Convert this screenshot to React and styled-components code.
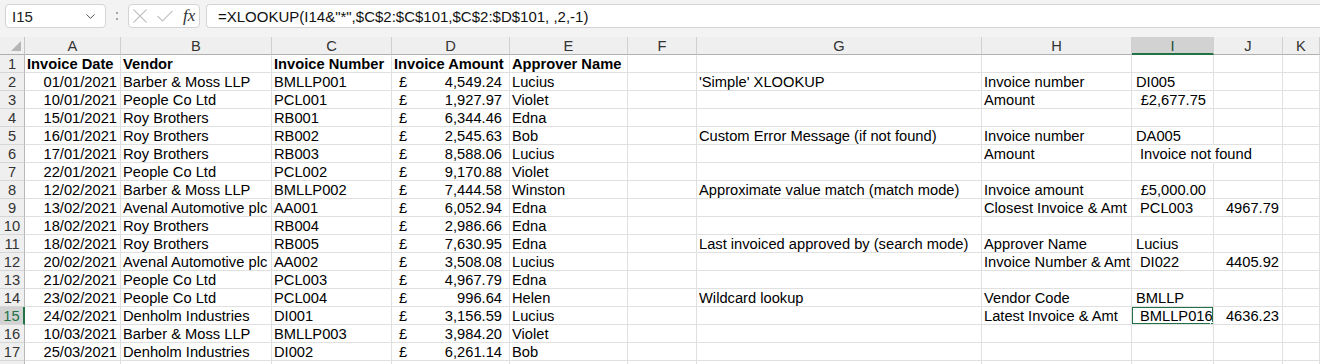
import React from 'react';
import styled, { createGlobalStyle } from 'styled-components';
import { ChevronDown } from 'lucide-react';

const GlobalStyle = createGlobalStyle`
  html, body {
    margin: 0;
    padding: 0;
    background: #ffffff;
    overflow: hidden;
  }
  body {
    font-family: "Liberation Sans", Arial, sans-serif;
    color: #000;
  }
`;

const FormulaBar = styled.div`
  display: flex;
  align-items: stretch;
  height: 37px;
  box-sizing: border-box;
  padding: 4px 0 9px 5px;
  background: #f3f3f3;
`;

const Box = styled.div`
  box-sizing: border-box;
  background: #fff;
  border: 1px solid #d4d4d4;
  border-radius: 4px;
  display: flex;
  align-items: center;
`;

const NameBox = styled(Box)`
  width: 101px;
  padding: 0 7px 0 6px;
  justify-content: space-between;
  font-size: 15px;
  color: #222;
`;

const Grip = styled.div`
  width: 22px;
  display: flex;
  flex-direction: column;
  align-items: center;
  justify-content: center;
  gap: 4px;
  span {
    width: 2px;
    height: 2px;
    background: #a6a6a6;
  }
`;

const FxBox = styled(Box)`
  width: 72px;
  padding: 0 0 0 4px;
  margin-right: 6px;
  svg {
    flex-shrink: 0;
  }
`;

const IconGap = styled.span`
  width: ${p => p.$w}px;
  flex-shrink: 0;
`;

const Fx = styled.span`
  font-family: "Liberation Serif", "Times New Roman", serif;
  font-style: italic;
  font-size: 17px;
  color: #333;
`;

const FormulaInput = styled(Box)`
  flex: 1;
  border-right: none;
  border-radius: 4px 0 0 4px;
  padding-left: 11px;
  font-size: 15px;
  color: #111;
  white-space: nowrap;
`;

const Sheet = styled.div`
  display: grid;
  grid-template-columns: 25px 96px 151px 120px 118px 118px 69px 285px 150px 82px 69px 1fr;
  grid-auto-rows: 18px;
  font-size: 14.7px;
`;

const Corner = styled.div`
  box-sizing: border-box;
  background: #efefef;
  border-right: 1px solid #c6c6c6;
  border-bottom: 1px solid #b0b0b0;
  display: flex;
  align-items: flex-end;
  justify-content: flex-end;
  padding: 0 3px 3px 0;
`;

const ColHead = styled.div`
  box-sizing: border-box;
  background: ${p => (p.$selected ? '#d2d2d2' : '#efefef')};
  border-right: 1px solid #d0d0d0;
  border-bottom: ${p => (p.$selected ? '2px solid #217346' : '1px solid #b0b0b0')};
  text-align: center;
  line-height: 18px;
  color: ${p => (p.$selected ? '#1c4f33' : '#333')};
  overflow: hidden;
`;

const RowHead = styled.div`
  box-sizing: border-box;
  background: ${p => (p.$selected ? '#d2d2d2' : '#efefef')};
  border-right: ${p => (p.$selected ? '2px solid #217346' : '1px solid #b8b8b8')};
  border-bottom: 1px solid #d6d6d6;
  text-align: center;
  line-height: 18px;
  color: ${p => (p.$selected ? '#217346' : '#333')};
  overflow: hidden;
`;

const Cell = styled.div`
  position: relative;
  box-sizing: border-box;
  border-right: 1px solid ${p => (p.$spill ? 'transparent' : '#e0e0e0')};
  border-bottom: 1px solid #e0e0e0;
  padding: 0 ${p => p.$padRight ?? 3}px 0 ${p => p.$padLeft ?? 2}px;
  font-weight: ${p => (p.$bold ? 700 : 400)};
  text-align: ${p => p.$align || 'left'};
  white-space: nowrap;
  overflow: ${p => (p.$spill ? 'visible' : 'hidden')};
  line-height: 18px;
`;

const MoneyCell = styled(Cell)`
  display: flex;
  justify-content: space-between;
  padding: 0 7px 0 7px;
`;

const SpillBox = styled.div`
  position: absolute;
  left: -1px;
  top: -1px;
  width: 152px;
  height: 19px;
  border: 1px solid #3c79d0;
  box-sizing: border-box;
  z-index: 2;
  pointer-events: none;
`;

const SelectionBox = styled.div`
  position: absolute;
  left: -1px;
  top: -1px;
  width: 83px;
  height: 19px;
  border: 2px solid #217346;
  box-sizing: border-box;
  z-index: 3;
  pointer-events: none;
`;

const FillHandle = styled.div`
  position: absolute;
  left: 78px;
  top: 15px;
  width: 5px;
  height: 5px;
  background: #217346;
  border: 1px solid #fff;
  z-index: 4;
`;

const COLS = ['A', 'B', 'C', 'D', 'E', 'F', 'G', 'H', 'I', 'J', 'K'];

const table = [
  ['01/01/2021', 'Barber & Moss LLP', 'BMLLP001', '4,549.24', 'Lucius'],
  ['10/01/2021', 'People Co Ltd', 'PCL001', '1,927.97', 'Violet'],
  ['15/01/2021', 'Roy Brothers', 'RB001', '6,344.46', 'Edna'],
  ['16/01/2021', 'Roy Brothers', 'RB002', '2,545.63', 'Bob'],
  ['17/01/2021', 'Roy Brothers', 'RB003', '8,588.06', 'Lucius'],
  ['22/01/2021', 'People Co Ltd', 'PCL002', '9,170.88', 'Violet'],
  ['12/02/2021', 'Barber & Moss LLP', 'BMLLP002', '7,444.58', 'Winston'],
  ['13/02/2021', 'Avenal Automotive plc', 'AA001', '6,052.94', 'Edna'],
  ['18/02/2021', 'Roy Brothers', 'RB004', '2,986.66', 'Edna'],
  ['18/02/2021', 'Roy Brothers', 'RB005', '7,630.95', 'Edna'],
  ['20/02/2021', 'Avenal Automotive plc', 'AA002', '3,508.08', 'Lucius'],
  ['21/02/2021', 'People Co Ltd', 'PCL003', '4,967.79', 'Edna'],
  ['23/02/2021', 'People Co Ltd', 'PCL004', '996.64', 'Helen'],
  ['24/02/2021', 'Denholm Industries', 'DI001', '3,156.59', 'Lucius'],
  ['10/03/2021', 'Barber & Moss LLP', 'BMLLP003', '3,984.20', 'Violet'],
  ['25/03/2021', 'Denholm Industries', 'DI002', '6,261.14', 'Bob'],
];

// G..J lookup examples, keyed by row number
const lookups = {
  2: { G: "'Simple' XLOOKUP", H: 'Invoice number', I: 'DI005' },
  3: { H: 'Amount', I: { text: '£2,677.75', money: true } },
  5: { G: 'Custom Error Message (if not found)', H: 'Invoice number', I: 'DA005' },
  6: { H: 'Amount', I: { text: 'Invoice not found', indent: true, spill: true } },
  8: { G: 'Approximate value match (match mode)', H: 'Invoice amount', I: { text: '£5,000.00', money: true } },
  9: { H: 'Closest Invoice & Amt', I: { text: 'PCL003', indent: true }, J: '4967.79' },
  11: { G: 'Last invoiced approved by (search mode)', H: 'Approver Name', I: 'Lucius' },
  12: { H: 'Invoice Number & Amt', I: { text: 'DI022', indent: true }, J: '4405.92' },
  14: { G: 'Wildcard lookup', H: 'Vendor Code', I: 'BMLLP' },
  15: { H: 'Latest Invoice & Amt', I: { text: 'BMLLP016', indent: true }, J: '4636.23' },
};

function renderCell(row, col) {
  const key = `${col}${row}`;
  if (row === 1) {
    const heads = ['Invoice Date', 'Vendor', 'Invoice Number', 'Invoice Amount', 'Approver Name'];
    const i = COLS.indexOf(col);
    return <Cell key={key} $bold>{i < 5 ? heads[i] : ''}</Cell>;
  }
  const rec = table[row - 2];
  if (rec && col === 'A') return <Cell key={key} $align="right">{rec[0]}</Cell>;
  if (rec && col === 'B') return <Cell key={key}>{rec[1]}</Cell>;
  if (rec && col === 'C') return <Cell key={key}>{rec[2]}</Cell>;
  if (rec && col === 'D')
    return (
      <MoneyCell key={key}>
        <span>£</span>
        <span>{rec[3]}</span>
      </MoneyCell>
    );
  if (rec && col === 'E') return <Cell key={key}>{rec[4]}</Cell>;

  const extra = lookups[row] && lookups[row][col];
  const selected = row === 15 && col === 'I';
  const overlay = selected ? (
    <>
      <SpillBox />
      <SelectionBox />
      <FillHandle />
    </>
  ) : null;

  if (!extra) return <Cell key={key}>{overlay}</Cell>;
  if (typeof extra === 'string') {
    if (col === 'J') return <Cell key={key} $align="right">{extra}</Cell>;
    return <Cell key={key} $padLeft={col === 'I' ? 4 : 2}>{extra}</Cell>;
  }
  if (extra.money)
    return (
      <Cell key={key} $align="right" $padRight={7}>
        {extra.text}
      </Cell>
    );
  return (
    <Cell key={key} $padLeft={extra.indent ? 8 : 2} $spill={extra.spill}>
      {extra.text}
      {overlay}
    </Cell>
  );
}

export default function App() {
  const rows = Array.from({ length: 18 }, (_, i) => i + 1);
  return (
    <>
      <GlobalStyle />
      <FormulaBar>
        <NameBox>
          <span>I15</span>
          <ChevronDown size={15} color="#444" strokeWidth={1.5} />
        </NameBox>
        <Grip>
          <span />
          <span />
        </Grip>
        <FxBox>
          <svg width="14" height="14" viewBox="0 0 14 14">
            <path d="M0.5 0.5 L13.5 13.5 M13.5 0.5 L0.5 13.5" stroke="#c2c2c2" strokeWidth="1.1" fill="none" />
          </svg>
          <IconGap $w={10} />
          <svg width="16" height="12" viewBox="0 0 16 12">
            <path d="M0.5 6 L5.5 11 L15.5 0.8" stroke="#c2c2c2" strokeWidth="1.1" fill="none" />
          </svg>
          <IconGap $w={10} />
          <Fx>fx</Fx>
        </FxBox>
        <FormulaInput>=XLOOKUP(I14&amp;"*",$C$2:$C$101,$C$2:$D$101, ,2,-1)</FormulaInput>
      </FormulaBar>
      <Sheet>
        <Corner>
          <svg width="10" height="10" viewBox="0 0 10 10">
            <polygon points="10,0 10,10 0,10" fill="#b5b5b5" />
          </svg>
        </Corner>
        {COLS.map(c => (
          <ColHead key={c} $selected={c === 'I'}>
            {c}
          </ColHead>
        ))}
        {rows.map(r => (
          <React.Fragment key={r}>
            <RowHead $selected={r === 15}>{r < 18 ? r : ''}</RowHead>
            {COLS.map(c => renderCell(r, c))}
          </React.Fragment>
        ))}
      </Sheet>
    </>
  );
}
